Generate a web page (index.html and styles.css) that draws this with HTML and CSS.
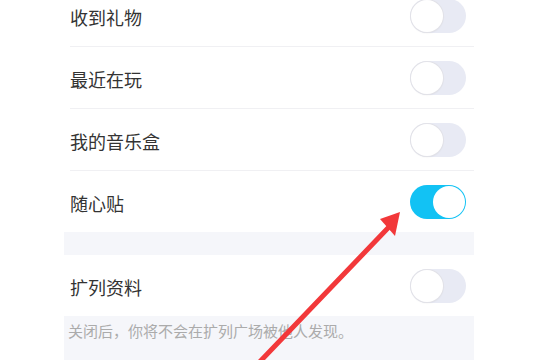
FILE: index.html
```html
<!DOCTYPE html>
<html lang="zh">
<head>
<meta charset="utf-8">
<link rel="stylesheet" href="styles.css">
</head>
<body>
<div class="page">
  <div class="panel">
    <div class="group">
      <div class="row"><span class="label">收到礼物</span><span class="switch"></span></div>
      <div class="row"><span class="label">最近在玩</span><span class="switch"></span></div>
      <div class="row"><span class="label">我的音乐盒</span><span class="switch"></span></div>
      <div class="row last"><span class="label">随心贴</span><span class="switch on"></span></div>
    </div>
    <div class="gap"></div>
    <div class="group">
      <div class="row last"><span class="label">扩列资料</span><span class="switch"></span></div>
    </div>
    <div class="note">关闭后，你将不会在扩列广场被他人发现。</div>
  </div>
  <svg class="arrow" width="539" height="360" viewBox="0 0 539 360">
    <line x1="250" y1="372" x2="388" y2="228" stroke="#f2383a" stroke-width="5" stroke-linecap="round"/>
    <polygon points="400,212 380,219 395,236" fill="#f2383a"/>
  </svg>
</div>
</body>
</html>
```
FILE: styles.css
```css
html, body {
  margin: 0;
  padding: 0;
  background: #ffffff;
}
.page {
  position: relative;
  width: 539px;
  height: 360px;
  overflow: hidden;
  font-family: "Noto Sans CJK SC", "Noto Sans", sans-serif;
}
.panel {
  margin-left: 64px;
  width: 410px;
  margin-top: -15px;
}
.group {
  background: #ffffff;
}
.row {
  margin-left: 6px;
  height: 61px;
  display: flex;
  align-items: center;
  justify-content: space-between;
  padding-right: 8px;
  border-bottom: 1px solid #f0f0f3;
}
.row.last {
  border-bottom: none;
}
.label {
  font-size: 18px;
  color: #333333;
  padding-top: 3px;
}
.switch {
  position: relative;
  width: 56px;
  height: 34px;
  border-radius: 17px;
  background: #e8eaf4;
  box-sizing: border-box;
}
.switch::after {
  content: "";
  position: absolute;
  left: 1px;
  top: 1px;
  width: 32px;
  height: 32px;
  border-radius: 50%;
  background: #ffffff;
  box-shadow: 0 0 0 1px #e2e2e8, 0 1px 2px rgba(0,0,0,0.08);
}
.switch.on {
  background: #12c2f4;
}
.switch.on::after {
  left: 23px;
  box-shadow: none;
}
.gap {
  height: 23px;
  background: #f5f6fa;
}
.note {
  background: #f5f6fa;
  height: 60px;
  padding: 4px 0 0 4px;
  font-size: 15px;
  color: #ababab;
  box-sizing: border-box;
}
.arrow {
  position: absolute;
  left: 0;
  top: 0;
  pointer-events: none;
}
```
